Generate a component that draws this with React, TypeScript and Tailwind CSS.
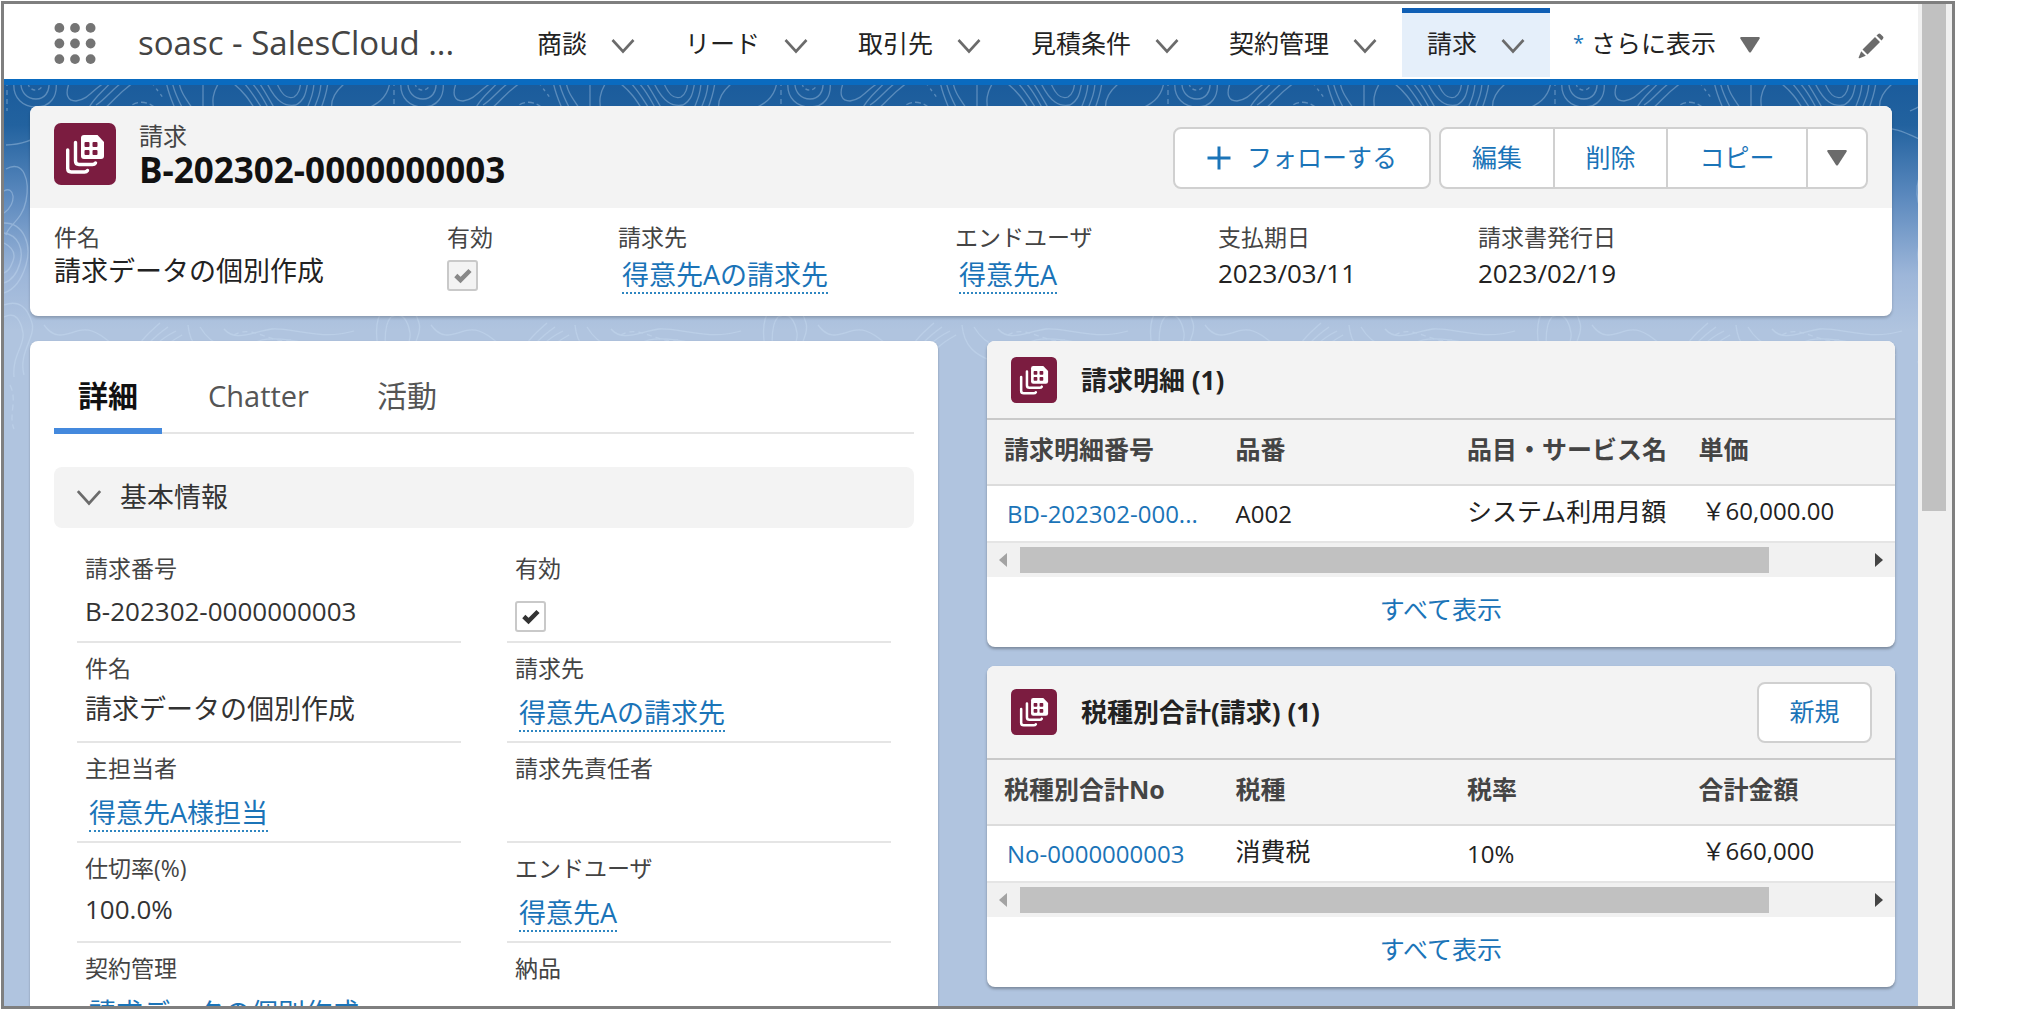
import { ReactNode, useId } from 'react';

const blue = 'text-[#1b74b8]';

function Chevron({ className }: { className: string }) {
  return (
    <svg viewBox="0 0 24 16" className={className} fill="none" stroke="currentColor" strokeWidth="2.6" aria-hidden="true">
      <path d="M1.5 2 L12 13.5 L22.5 2" />
    </svg>
  );
}

function Triangle({ className }: { className: string }) {
  return (
    <svg viewBox="0 0 20 16" className={className} fill="currentColor" aria-hidden="true">
      <path d="M1.2 0 H18.8 Q20.4 0.4 19.4 2 L11 15 Q10 16.2 9 15 L0.6 2 Q-0.4 0.4 1.2 0 Z" />
    </svg>
  );
}

function ObjectIcon({ className }: { className: string }) {
  return (
    <svg viewBox="0 0 62 62" className={className} aria-hidden="true">
      <rect width="62" height="62" rx="7" fill="#7b1c40" />
      <path d="M30 12 H43.5 L50 19 V33 Q50 36 47 36 H30 Q27 36 27 33 V15 Q27 12 30 12 Z" fill="#fff" />
      <g fill="#7b1c40">
        <rect x="30.5" y="19" width="5" height="5" rx="1" />
        <rect x="38.5" y="19" width="5" height="5" rx="1" />
        <rect x="30.5" y="27" width="5" height="5" rx="1" />
        <rect x="38.5" y="27" width="5" height="5" rx="1" />
      </g>
      <path
        d="M21.5 19.5 V38 Q21.5 41.5 25 41.5 H38.5 Q40.5 41.5 41.5 40 M13.7 27 V45.5 Q13.7 49 17.2 49 H30.5 Q32.5 49 33.5 47.5"
        fill="none"
        stroke="#fff"
        strokeWidth="3.4"
        strokeLinecap="round"
      />
    </svg>
  );
}

function Topography() {
  const id = useId();
  return (
    <svg className="absolute inset-x-0 top-0 h-[420px] w-full" aria-hidden="true">
      <defs>
        <pattern id={id} width="387" height="420" patternUnits="userSpaceOnUse">
          <g fill="none" stroke="#cfe3f7" strokeWidth="1.3" opacity="0.34">
            <path d="M10 -4 C8 14 20 22 32 22 C46 22 54 12 52 -4" />
            <path d="M17 -4 C16 8 24 14 32 14 C40 14 46 8 45 -4" />
            <path d="M24 -2 C25 7 38 8 39 -2" strokeDasharray="4 3" />
            <path d="M3 -4 V26" strokeDasharray="5 4" />
            <path d="M66 -4 C60 10 64 16 72 16 C86 14 90 2 104 -4" />
            <path d="M92 20 C102 14 108 4 120 -4 M100 24 C110 16 116 6 132 -4 M84 24 C92 10 98 8 108 -4" />
            <path d="M122 26 C130 14 146 14 156 28" strokeDasharray="6 3" />
            <path d="M148 -2 L160 14" strokeDasharray="3 4" />
            <path d="M162 -4 C164 8 168 16 172 26 M168 -4 C170 8 176 18 180 26 M175 -4 C176 8 184 16 190 26 M199 -2 V24" />
            <path d="M216 -4 C208 8 208 16 210 26" />
            <path d="M226 -4 C240 6 246 16 252 26 M238 -4 C248 6 254 18 260 26 M246 -4 C256 6 260 16 266 26 M254 -4 C262 8 266 16 272 26" />
            <path d="M262 -4 C272 18 282 22 292 20 C302 14 302 6 304 -4" />
            <path d="M272 -4 C278 12 284 14 290 12 C296 8 296 2 297 -4" />
            <path d="M310 -4 C310 8 306 16 302 26 M317 -4 C317 8 313 16 309 26 M324 -4 C323 8 320 16 316 26" />
            <path d="M344 -4 C330 6 326 16 328 26" />
            <path d="M358 26 C372 20 384 14 386 -4" />
            <path d="M2 60 C30 60 40 44 60 40 S110 70 140 52 S190 40 220 64 S290 50 320 44 S370 60 385 60" />
            <path d="M2 84 C20 74 26 96 22 116 S4 140 2 150 M385 84 C372 74 362 96 366 116 S380 140 385 150" />
            <path d="M0 106 C10 100 14 118 0 128 M387 106 C376 100 372 118 387 128" />
            <path d="M0 138 C20 138 28 160 22 180 S6 206 0 208" />
            <path d="M0 148 C14 150 20 164 16 178 S6 196 0 198" />
            <path d="M0 158 C8 162 12 168 9 176 S4 186 0 188" />
            <path d="M387 138 C370 142 362 164 368 182 S380 206 387 208" />
            <path d="M387 150 C377 154 371 166 374 178 S382 196 387 198" />
            <path d="M0 220 C16 214 24 224 28 238 S14 268 20 290 M0 232 C12 226 17 236 19 248 S8 270 10 292 M387 220 C374 224 370 240 374 262 M387 232 C381 238 380 250 382 270" />
            <path d="M126 276 C134 258 142 250 156 238 M134 276 C141 260 150 252 164 242 M142 276 C148 262 156 254 172 246 M150 276 C156 264 164 258 178 250" />
            <path d="M184 240 C186 262 198 270 214 276 M196 242 C208 262 230 270 250 258 S320 262 344 270" />
            <path d="M220 244 C232 258 250 246 268 244 S316 256 350 246" />
            <path d="M40 240 C56 262 70 240 88 246 S110 268 122 262 M30 262 C50 276 66 252 84 258" />
            <path d="M230 250 C250 238 268 262 290 254" strokeDasharray="5 4" />
            <path d="M366 276 C370 292 364 310 372 330 M6 300 C14 316 4 330 10 344 M378 286 V340" strokeDasharray="6 4" />
          </g>
        </pattern>
      </defs>
      <rect width="100%" height="100%" fill={`url(#${id})`} />
    </svg>
  );
}

const navItems = ['商談', 'リード', '取引先', '見積条件', '契約管理', '請求'];

function NavBar() {
  return (
    <header className="flex h-[81px] border-b-6 border-[#0a6bc0] bg-white">
      <button type="button" aria-label="アプリケーションランチャー" className="ml-[50px] mt-[19px] self-start">
        <svg viewBox="0 0 42 42" className="h-[41px] w-[42px]" fill="#747474" aria-hidden="true">
          {[5, 21, 37].map((y) => [5, 21, 37].map((x) => <circle key={`${x}-${y}`} cx={x} cy={y} r="5" />))}
        </svg>
      </button>
      <h1 className="ml-[42px] w-[374px] whitespace-nowrap pt-[21px] text-[33px] leading-9 text-[#444]">soasc - SalesCloud ...</h1>
      <nav className="flex whitespace-nowrap text-[25px] leading-8 text-[#222]">
        {navItems.map((name) => {
          const active = name === '請求';
          return (
            <a
              key={name}
              href="#"
              aria-current={active ? 'page' : undefined}
              className={
                active
                  ? 'mb-0.5 mt-1 flex items-start gap-6 border-t-5 border-[#0f5fb5] bg-[#e5effa] px-[25px] pt-[14px]'
                  : 'flex items-start gap-6 px-[25px] pt-[23px]'
              }
            >
              {name}
              <Chevron className="mt-[11px] h-4 w-6 text-[#6b6b6b]" />
            </a>
          );
        })}
        <button type="button" className="flex items-start pl-[23px] pt-[23px]">
          <span className={`mr-[7px] text-[20px] ${blue}`}>*</span>
          さらに表示
          <Triangle className="ml-6 mt-[10px] h-4 w-5 text-[#6b6b6b]" />
        </button>
      </nav>
      <button type="button" aria-label="ナビゲーション項目を編集" className="ml-auto mr-[34px] mt-[29px] self-start text-[#6b6b6b]">
        <svg viewBox="0 0 26 26" className="size-[26px]" fill="currentColor" aria-hidden="true">
          <path d="M17 4 L22 9 L9.500 21.500 L4.500 16.500 Z M18.500 2.500 L20.200 0.900 Q21.300 0 22.400 0.900 L25 3.600 Q26 4.700 25 5.800 L23.500 7.500 Z M3.200 18.200 L7.800 22.800 L1.500 25.300 Q0.300 25.500 0.700 24.300 Z" />
        </svg>
      </button>
    </header>
  );
}

function CheckBox({ label, checkClass, boxClass }: { label: string; checkClass: string; boxClass: string }) {
  return (
    <span className="inline-grid size-[31px] place-items-center align-top">
      <input
        type="checkbox"
        checked
        readOnly
        aria-label={label}
        className={`col-start-1 row-start-1 size-full appearance-none rounded-[3px] border-2 ${boxClass}`}
      />
      <svg viewBox="0 0 18 16" className={`pointer-events-none col-start-1 row-start-1 h-4 w-[18px] ${checkClass}`} fill="none" stroke="currentColor" strokeWidth="4.5" aria-hidden="true">
        <path d="M1.800 7.500 L6.500 12 L16 2.500" />
      </svg>
    </span>
  );
}

function RecordLink({ children }: { children: ReactNode }) {
  return (
    <a href="#" className={`ml-1 mt-1 inline-block border-b-2 border-dotted border-[#2e86c1] text-[27px] leading-[35px] ${blue}`}>
      {children}
    </a>
  );
}

function SummaryField({ label, children }: { label: string; children: ReactNode }) {
  return (
    <div>
      <dt className="text-[23px] leading-8 text-[#444]">{label}</dt>
      <dd className="text-[26px] leading-9 text-[#222]">{children}</dd>
    </div>
  );
}

const actionClass = `h-full border-r-2 border-[#d0d0d0] text-[25px] ${blue}`;

function RecordHeader() {
  return (
    <section className="relative mx-[26px] mt-[21px] overflow-hidden rounded-lg bg-white shadow-[0_2px_3px_rgba(0,0,0,0.2)]">
      <div className="flex h-[102px] bg-[#f3f3f3] px-6">
        <ObjectIcon className="mt-[17px] size-[62px]" />
        <div className="ml-[23px] pt-[14px]">
          <p className="text-[24px] leading-8 text-[#444]">請求</p>
          <h2 className="text-[35px] font-bold leading-9 text-[#111]">B-202302-0000000003</h2>
        </div>
        <button type="button" className={`ml-auto mt-[21px] flex h-[62px] w-[258px] items-center justify-center gap-4 rounded-lg border-2 border-[#d0d0d0] bg-white text-[25px] ${blue}`}>
          <svg viewBox="0 0 24 24" className="size-6" stroke="currentColor" strokeWidth="3" aria-hidden="true">
            <path d="M12 0.500 V23.500 M0.500 12 H23.500" />
          </svg>
          フォローする
        </button>
        <div className="ml-2 mt-[21px] flex h-[62px] rounded-lg border-2 border-[#d0d0d0] bg-white">
          <button type="button" className={`w-[114px] ${actionClass}`}>編集</button>
          <button type="button" className={`w-[113px] ${actionClass}`}>削除</button>
          <button type="button" className={`w-[140px] ${actionClass}`}>コピー</button>
          <button type="button" aria-label="その他のアクション" className="grid w-[58px] place-items-center text-[#6b6b6b]">
            <Triangle className="h-4 w-5" />
          </button>
        </div>
      </div>
      <dl className="grid h-[108px] grid-cols-[393fr_171fr_337fr_263fr_260fr_390fr] whitespace-nowrap px-6 pt-[13px]">
        <SummaryField label="件名"><span className="text-[27px]">請求データの個別作成</span></SummaryField>
        <SummaryField label="有効">
          <span className="flex pt-[7px]">
            <CheckBox label="有効" checkClass="text-[#888]" boxClass="border-[#c9c9c9] bg-[#f3f3f3]" />
          </span>
        </SummaryField>
        <SummaryField label="請求先"><RecordLink>得意先Aの請求先</RecordLink></SummaryField>
        <SummaryField label="エンドユーザ"><RecordLink>得意先A</RecordLink></SummaryField>
        <SummaryField label="支払期日"><span className="block pt-0.5">2023/03/11</span></SummaryField>
        <SummaryField label="請求書発行日"><span className="block pt-0.5">2023/02/19</span></SummaryField>
      </dl>
    </section>
  );
}

function DetailField({ label, children }: { label: string; children?: ReactNode }) {
  return (
    <div className="h-[100px] border-b-2 border-[#e5e5e5] pl-2 pt-[9px]">
      <dt className="text-[23px] leading-8 text-[#444]">{label}</dt>
      <dd className="pt-[7px] text-[26px] leading-9 text-[#333]">{children}</dd>
    </div>
  );
}

function DetailCard() {
  return (
    <section className="rounded-lg bg-white px-6 pt-[33px] shadow-[0_1px_2px_rgba(0,0,0,0.3)]">
      <div role="tablist" className="flex h-[60px] border-b-2 border-[#e5e5e5] leading-[44px]">
        <button type="button" role="tab" aria-selected="true" className="-mb-0.5 flex border-b-6 border-[#4489dd] px-6 text-[30px] font-bold text-[#111]">詳細</button>
        <button type="button" role="tab" aria-selected="false" className="ml-[22px] flex px-6 text-[29px] text-[#555]">Chatter</button>
        <button type="button" role="tab" aria-selected="false" className="ml-5 flex px-6 text-[30px] text-[#555]">活動</button>
      </div>
      <button type="button" aria-expanded="true" className="mt-[33px] flex h-[61px] w-full items-center gap-[18px] rounded-lg bg-[#f3f3f3] pl-[22px] text-[27px] text-[#333]">
        <Chevron className="h-[17px] w-[26px] text-[#6b6b6b]" />
        基本情報
      </button>
      <dl className="mt-[15px] grid grid-cols-2 gap-x-[46px] px-[23px]">
        <DetailField label="請求番号"><span className="block pt-0.5">B-202302-0000000003</span></DetailField>
        <DetailField label="有効">
          <span className="flex pt-2.5"><CheckBox label="有効" checkClass="text-[#333]" boxClass="border-[#c9c9c9] bg-white" /></span>
        </DetailField>
        <DetailField label="件名"><span className="text-[27px]">請求データの個別作成</span></DetailField>
        <DetailField label="請求先"><RecordLink>得意先Aの請求先</RecordLink></DetailField>
        <DetailField label="主担当者"><RecordLink>得意先A様担当</RecordLink></DetailField>
        <DetailField label="請求先責任者" />
        <DetailField label="仕切率(%)">100.0%</DetailField>
        <DetailField label="エンドユーザ"><RecordLink>得意先A</RecordLink></DetailField>
        <DetailField label="契約管理"><RecordLink>請求データの個別作成</RecordLink></DetailField>
        <DetailField label="納品" />
      </dl>
    </section>
  );
}

function RelatedList({ title, action, headers, row }: { title: string; action?: string; headers: string[]; row: string[] }) {
  return (
    <section className="overflow-hidden rounded-lg bg-white shadow-[0_2px_3px_rgba(0,0,0,0.3)]">
      <div className={`flex items-center border-b-2 border-[#c9c9c9] bg-[#f3f3f3] pl-6 pr-[23px] ${action ? 'h-[94px]' : 'h-[79px]'}`}>
        <ObjectIcon className="size-[46px]" />
        <h3 className="ml-6 text-[26px] font-bold leading-9 text-[#222]">{title}</h3>
        {action && (
          <button type="button" className={`ml-auto h-[61px] w-[115px] rounded-lg border-2 border-[#d0d0d0] bg-white text-[25px] ${blue}`}>{action}</button>
        )}
      </div>
      <table className="w-full table-fixed whitespace-nowrap text-left">
        <thead>
          <tr className="h-[65px] border-b-2 border-[#dcdcdc] bg-[#f3f3f3] text-[25px] leading-8 text-[#444]">
            {headers.map((h) => (
              <th key={h} scope="col" className="w-[25.5%] pb-1.5 pl-[17px] font-bold last:w-auto">{h}</th>
            ))}
          </tr>
        </thead>
        <tbody>
          <tr className="h-[57px] border-b-2 border-[#e5e5e5] text-[25px] leading-8 text-[#222]">
            {row.map((value, i) => (
              <td
                key={value}
                className={
                  i === 0
                    ? 'pl-5 text-[24px]'
                    : i === 3
                      ? 'pb-1.5 pl-5 text-[24px]'
                      : /^[A-Z0-9]/.test(value)
                        ? 'pl-[17px] text-[24px]'
                        : 'pb-1.5 pl-[17px]'
                }
              >
                {i === 0 ? <a href="#" className={blue}>{value}</a> : value}
              </td>
            ))}
          </tr>
        </tbody>
      </table>
      <div className="flex h-[34px] items-center bg-[#f1f1f1] px-3">
        <svg viewBox="0 0 8 14" className="h-[14px] w-2" fill="#a3a3a3" aria-hidden="true"><path d="M8 0 V14 L0 7 Z" /></svg>
        <div className="mx-[13px] flex-1"><div className="h-[26px] w-[89%] bg-[#c1c1c1]" /></div>
        <svg viewBox="0 0 8 14" className="h-[14px] w-2" fill="#444" aria-hidden="true"><path d="M0 0 V14 L8 7 Z" /></svg>
      </div>
      <div className="flex h-[70px] justify-center pt-4">
        <a href="#" className={`text-[25px] leading-8 ${blue}`}>すべて表示</a>
      </div>
    </section>
  );
}

export default function App() {
  return (
    <div className="h-screen overflow-hidden bg-white pb-[6px] pl-px pr-[72px] pt-px font-['Open_Sans','Noto_Sans_CJK_JP',sans-serif]">
      <div className="flex h-full overflow-hidden border-3 border-[#7f7f7f]">
        <div className="flex min-w-0 flex-1 flex-col">
          <NavBar />
          <main className="relative min-h-0 flex-1 overflow-hidden bg-[#b0c4df] bg-[linear-gradient(180deg,#1b5c9c_0px,#22629f_40px,#5a88bd_110px,#9db6d9_190px,#b0c4df_245px)] bg-no-repeat">
            <Topography />
            <RecordHeader />
            <div className="relative grid grid-cols-2 gap-[49px] pl-[26px] pr-[23px] pt-[25px]">
              <DetailCard />
              <div className="flex flex-col gap-[19px]">
                <RelatedList
                  title="請求明細 (1)"
                  headers={['請求明細番号', '品番', '品目・サービス名', '単価']}
                  row={['BD-202302-000...', 'A002', 'システム利用月額', '￥60,000.00']}
                />
                <RelatedList
                  title="税種別合計(請求) (1)"
                  action="新規"
                  headers={['税種別合計No', '税種', '税率', '合計金額']}
                  row={['No-0000000003', '消費税', '10%', '￥660,000']}
                />
                <div className="h-20 rounded-lg bg-[#f3f3f3]" />
              </div>
            </div>
          </main>
        </div>
        <div className="w-[34px] bg-[#f0f0f0] pl-1 pr-1.5" aria-hidden="true">
          <div className="h-[507px] bg-[#c1c1c1]" />
        </div>
      </div>
    </div>
  );
}
